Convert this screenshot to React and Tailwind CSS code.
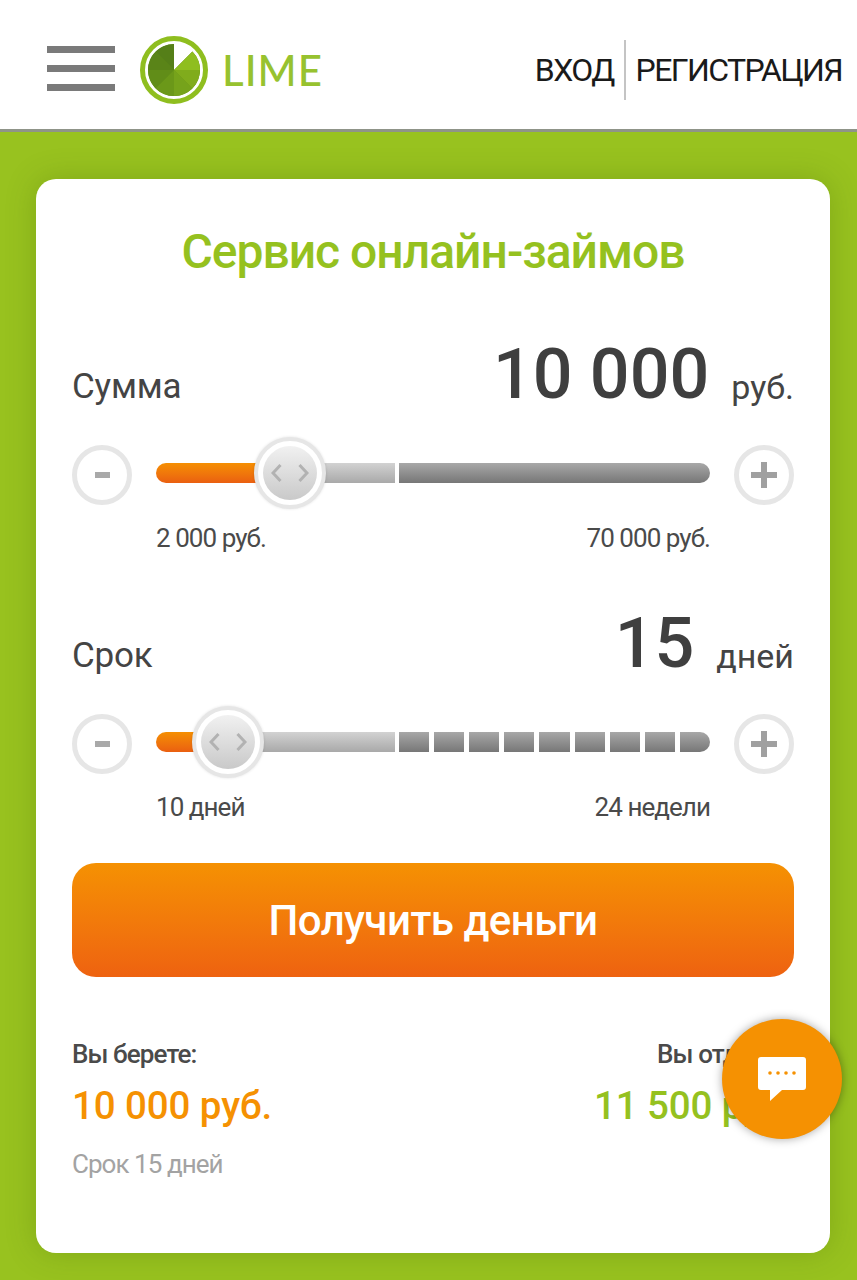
function Logo() {
  return (
    <div className="flex items-center gap-[13px]">
      <svg width="70" height="70" viewBox="0 0 70 70">
        <circle cx="35" cy="35" r="31.5" fill="none" stroke="#8fbe1f" strokeWidth="5" />
        <path d="M35 35V9A26 26 0 1 0 53.4 16.6Z" fill="#5f8a17" />
        <path d="M35 35V9A26 26 0 0 0 16.6 16.6Z" fill="#557f18" />
        <path d="M35 35L16.6 16.6A26 26 0 0 0 9 35Z" fill="#5a8418" />
        <path d="M35 35H9A26 26 0 0 0 16.6 53.4Z" fill="#618d18" />
        <path d="M35 35L16.6 53.4A26 26 0 0 0 35 61Z" fill="#6b9819" />
        <path d="M35 35V61A26 26 0 0 0 53.4 53.4Z" fill="#76a31b" />
        <path d="M35 35L53.4 53.4A26 26 0 0 0 61 35Z" fill="#80ac1c" />
        <path d="M35 35H61A26 26 0 0 0 53.4 16.6Z" fill="#8fbe1f" />
      </svg>
      <span className="font-['Lato',sans-serif] text-[42px] font-medium leading-none tracking-[1px] text-[#97c22f]">LIME</span>
    </div>
  );
}

function RoundButton({ sign }) {
  return (
    <button className="flex h-[60px] w-[60px] shrink-0 items-center justify-center rounded-full border-[5px] border-[#e6e6e6] bg-white">
      {sign === "minus" ? (
        <span className="h-[6px] w-[15px] bg-[#a9a9a9]" />
      ) : (
        <svg width="26" height="26" viewBox="0 0 26 26" fill="#a0a0a0">
          <rect x="0" y="10" width="26" height="6" />
          <rect x="10" y="0" width="6" height="26" />
        </svg>
      )}
    </button>
  );
}

function Thumb({ className }) {
  return (
    <div className={`absolute top-[-26px] flex h-[72px] w-[72px] items-center justify-center rounded-full border-4 border-[#e6e6e6] bg-white shadow-[0_0_3px_rgba(0,0,0,0.12)] ${className}`}>
      <div className="flex h-[54px] w-[54px] items-center justify-center gap-4 rounded-full bg-gradient-to-b from-[#f1f1f1] to-[#c9c9c9]">
        <svg width="11" height="20" viewBox="0 0 11 20" fill="none" stroke="#b2b2b2" strokeWidth="3">
          <path d="M9.5 2L2 10l7.5 8" />
        </svg>
        <svg width="11" height="20" viewBox="0 0 11 20" fill="none" stroke="#b2b2b2" strokeWidth="3">
          <path d="M1.5 2L9 10l-7.5 8" />
        </svg>
      </div>
    </div>
  );
}

function Slider({ fillClass, thumbClass, lightClass, segments, minLabel, maxLabel }) {
  return (
    <div>
      <div className="flex items-center gap-6">
        <RoundButton sign="minus" />
        <div className="relative mb-1 flex h-5 flex-1">
          <div className={`h-5 shrink-0 rounded-l-full bg-gradient-to-b from-[#f58f02] to-[#ea5f10] ${fillClass}`} />
          <div className={`h-5 shrink-0 bg-gradient-to-b from-[#d2d2d2] to-[#a9a9a9] ${lightClass}`} />
          <div className="ml-1 flex flex-1 gap-[5px]">
            {segments.map((seg, i) => (
              <div
                key={i}
                className={`h-5 flex-1 bg-gradient-to-b from-[#a8a8a8] to-[#777777] ${i === segments.length - 1 ? "rounded-r-full" : ""}`}
              />
            ))}
          </div>
          <Thumb className={thumbClass} />
        </div>
        <RoundButton sign="plus" />
      </div>
      <div className="mt-[17px] flex justify-between px-[84px] text-[26px] leading-[32px] tracking-[-0.95px] text-[#4a4a4a]">
        <span>{minLabel}</span>
        <span>{maxLabel}</span>
      </div>
    </div>
  );
}

function ValueRow({ label, value, unit }) {
  return (
    <div className="flex items-end justify-between">
      <span className="mb-[3px] text-[35px] leading-[40px] tracking-[-0.2px] text-[#444444]">{label}</span>
      <div className="flex items-end">
        <span className="text-[70px] font-medium leading-[72px] text-[#3f3f3f]">{value}</span>
        <span className="mb-[3px] ml-[22px] text-[34px] leading-[40px] text-[#444444]">{unit}</span>
      </div>
    </div>
  );
}

export default function App() {
  return (
    <div className="relative h-[1280px] overflow-hidden bg-[#98c21f] font-['Roboto',sans-serif]">
      <header className="flex h-[132px] items-center justify-between border-b-[3px] border-[#8f9488] bg-white pl-[47px] pr-[15px] pt-[10px]">
        <div className="flex items-center gap-6">
          <div className="mb-[2px] flex w-[68px] flex-col gap-3">
            <span className="h-[7px] bg-[#7a7a7a]" />
            <span className="h-[7px] bg-[#7a7a7a]" />
            <span className="h-[7px] bg-[#7a7a7a]" />
          </div>
          <Logo />
        </div>
        <nav className="flex items-center text-[32px] leading-none tracking-[-1.6px] text-[#1a1a1a]">
          <span>ВХОД</span>
          <span className="mx-[10px] h-[60px] w-[2px] bg-[#c4c4c4]" />
          <span>РЕГИСТРАЦИЯ</span>
        </nav>
      </header>

      <main className="mx-9 mt-[47px] h-[1074px] w-[794px] rounded-[20px] bg-white px-9 shadow-[0_0_30px_rgba(60,90,0,0.25)]">
        <h1 className="pt-[45px] text-center text-[48px] font-medium leading-[56px] tracking-[-1px] text-[#95c11f]">
          Сервис онлайн-займов
        </h1>

        <div className="mt-[58px]">
          <ValueRow label="Сумма" value="10 000" unit="руб." />
        </div>
        <div className="mt-[35px]">
          <Slider
            fillClass="w-[100px]"
            lightClass="w-[139px]"
            thumbClass="left-[98px]"
            segments={[1]}
            minLabel="2 000 руб."
            maxLabel="70 000 руб."
          />
        </div>

        <div className="mt-[53px]">
          <ValueRow label="Срок" value="15" unit="дней" />
        </div>
        <div className="mt-[35px]">
          <Slider
            fillClass="w-[40px]"
            lightClass="w-[199px]"
            thumbClass="left-[36px]"
            segments={[1, 2, 3, 4, 5, 6, 7, 8, 9]}
            minLabel="10 дней"
            maxLabel="24 недели"
          />
        </div>

        <button className="mt-[40px] h-[114px] w-full rounded-[24px] bg-gradient-to-b from-[#f59102] to-[#ee6210] text-[42px] font-medium tracking-[-0.5px] text-white">
          Получить деньги
        </button>

        <div className="mt-[61px] flex justify-between">
          <div>
            <div className="text-[26px] font-medium leading-[32px] tracking-[-0.9px] text-[#4a4a4a]">Вы берете:</div>
            <div className="mt-[12px] text-[38.5px] font-medium leading-[48px] tracking-[-0.1px] text-[#f59102]">10 000 руб.</div>
            <div className="mt-[18px] text-[26px] leading-[32px] tracking-[-0.95px] text-[#a3a3a3]">Срок 15 дней</div>
          </div>
          <div className="text-right">
            <div className="text-[26px] font-medium leading-[32px] tracking-[-0.9px] text-[#4a4a4a]">Вы отдаете:</div>
            <div className="mt-[12px] text-[38.5px] font-medium leading-[48px] tracking-[-0.1px] text-[#95c11f]">11 500 руб.</div>
          </div>
        </div>
      </main>

      <button className="absolute left-[722px] top-[1019px] flex h-[120px] w-[120px] items-center justify-center rounded-full bg-[#f59102] shadow-[0_0_10px_rgba(0,0,0,0.35)]">
        <svg width="48" height="44" viewBox="0 0 48 44">
          <path d="M3 0H45A3 3 0 0 1 48 3V30A3 3 0 0 1 45 33H24L12 44V33H3A3 3 0 0 1 0 30V3A3 3 0 0 1 3 0Z" fill="#fff" />
          <circle cx="12" cy="16" r="1.8" fill="#f59102" />
          <circle cx="20" cy="16" r="1.8" fill="#f59102" />
          <circle cx="28" cy="16" r="1.8" fill="#f59102" />
          <circle cx="36" cy="16" r="1.8" fill="#f59102" />
        </svg>
      </button>
    </div>
  );
}
